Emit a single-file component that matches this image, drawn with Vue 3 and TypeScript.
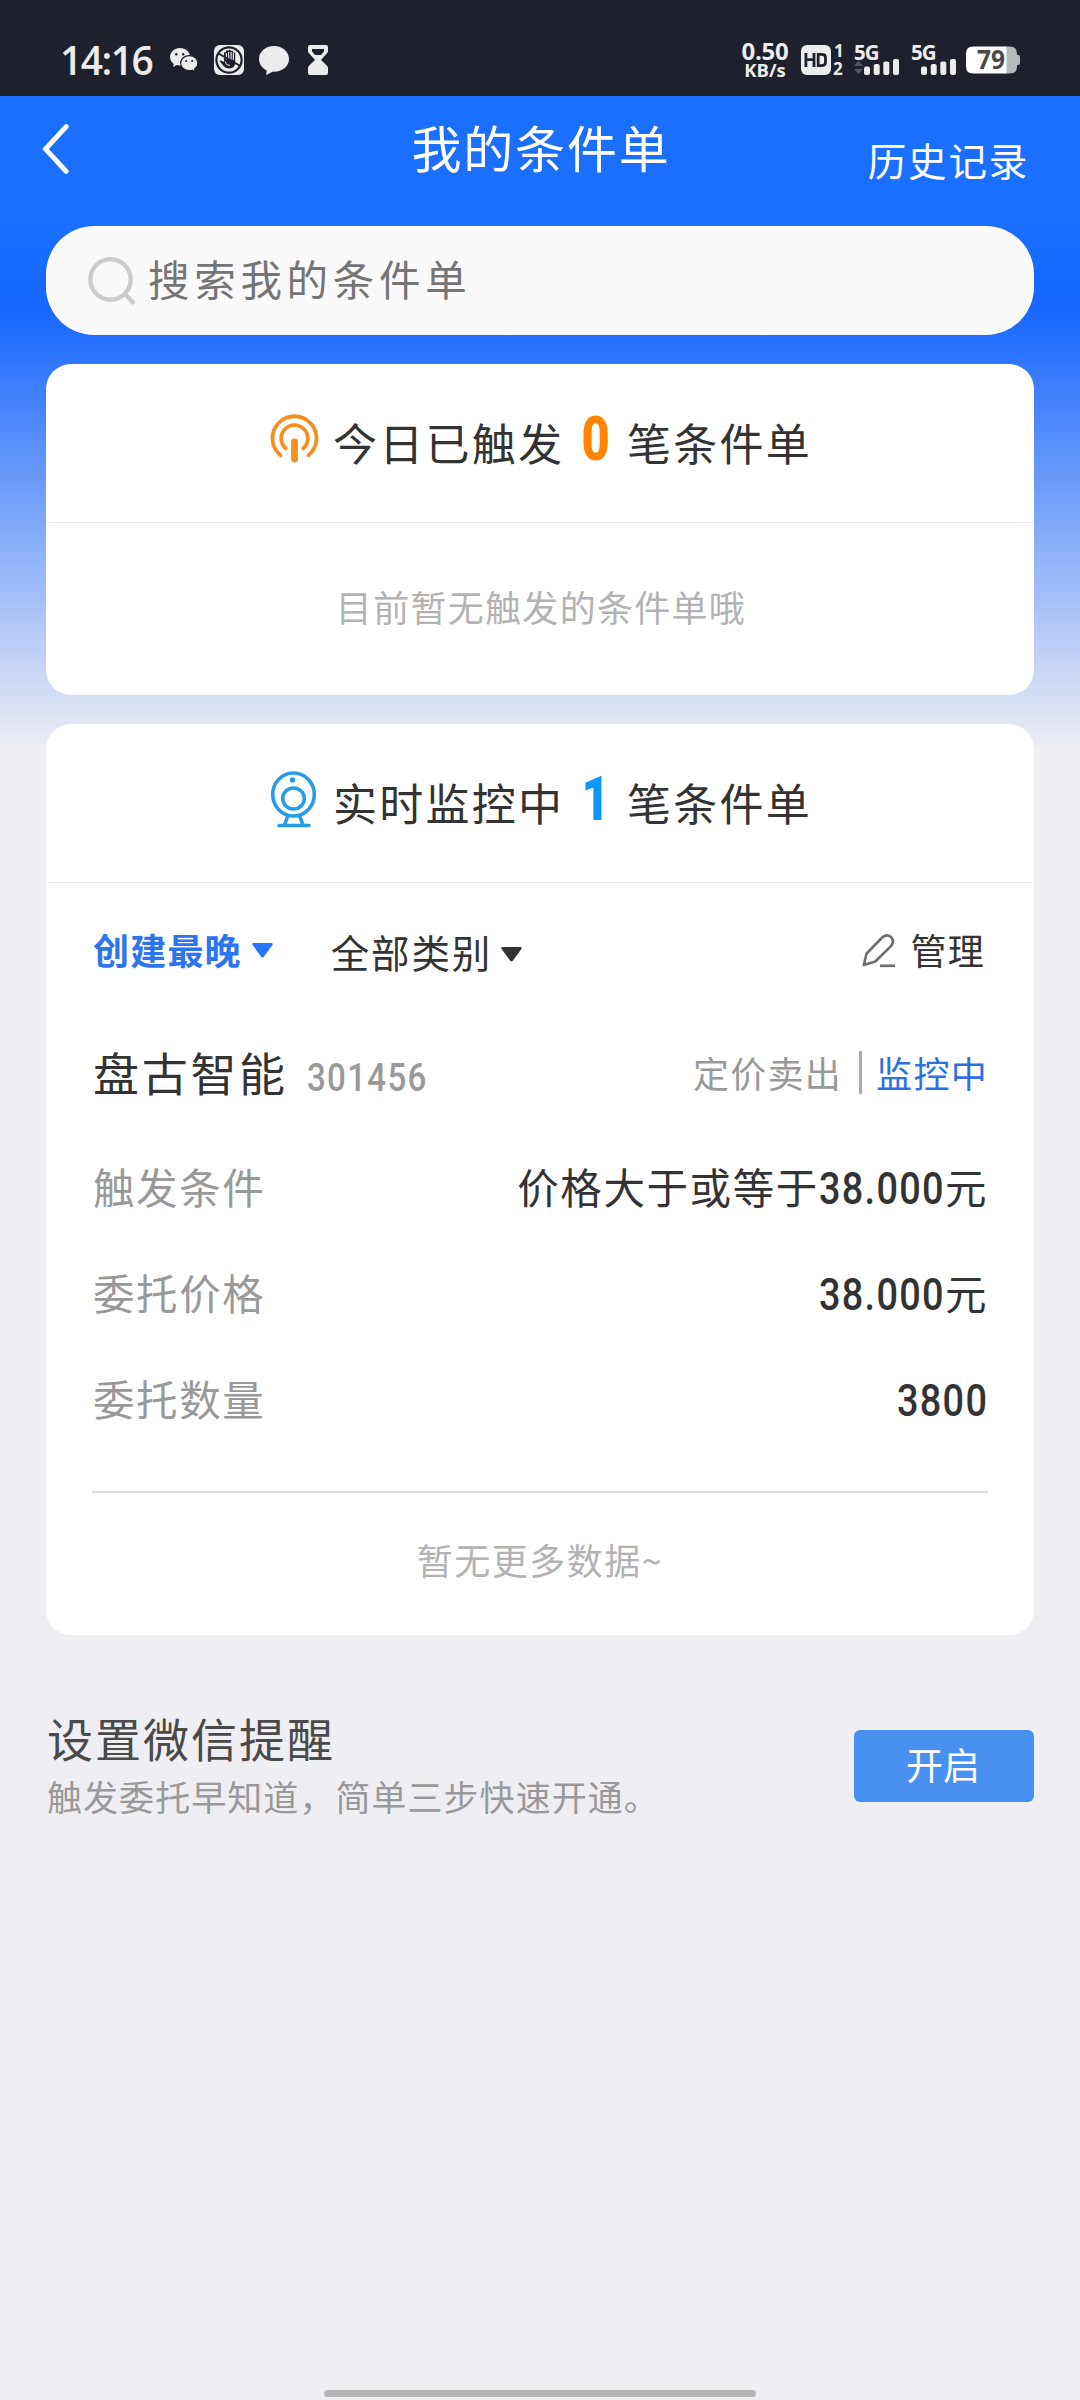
<script setup lang="ts">
interface Detail {
  label: string
  prefix: string
  amount: string
  unit: string
}

const details: Detail[] = [
  { label: '触发条件', prefix: '价格大于或等于', amount: '38.000', unit: '元' },
  { label: '委托价格', prefix: '', amount: '38.000', unit: '元' },
  { label: '委托数量', prefix: '', amount: '3800', unit: '' },
]

// Condensed digits leave unused width on their right; pull the next text in by it.
function condensedGap(amount: string): string {
  const dots = amount.split('.').length - 1
  const digits = amount.length - dots
  return `${-(digits * 3.67 + dots * 1.9).toFixed(1)}px`
}
</script>

<template>
  <div class="page">
    <header class="status">
      <span class="clock">14:16</span>
      <svg class="wechat" width="28" height="25" viewBox="0 0 28 25">
        <path fill="#ececec" d="M10 0C4.500 0 0 3.900 0 8.900c0 2.900 1.500 5.300 3.800 7L3 19l3.800-1.900c1 .3 2.100.5 3.200.5C15.500 17.600 20 13.700 20 8.800S15.500 0 10 0z" />
        <path fill="#ececec" stroke="#1e212b" stroke-width="1.200" d="M19.300 7.600c-4.800 0-8.700 3.300-8.700 7.500s3.900 7.500 8.700 7.500c1 0 2-.1 2.900-.4l3.200 1.700-.8-2.800c2-1.400 3.400-3.500 3.400-6 0-4.200-3.900-7.500-8.700-7.500z" />
        <g fill="#1e212b"><circle cx="6.300" cy="6.200" r="1.200" /><circle cx="13.200" cy="6.200" r="1.200" /><circle cx="16.200" cy="13" r="1" /><circle cx="22.200" cy="13" r="1" /></g>
      </svg>
      <svg class="hand" width="30" height="30" viewBox="0 0 30 30">
        <rect width="30" height="30" rx="6" fill="#ececec" />
        <circle cx="15" cy="15" r="12.600" fill="none" stroke="#1e212b" stroke-width="2.200" />
        <path fill="#1e212b" d="M10 14V8q0-1 1-1t1 1V6.500q0-1.200 1.200-1.200t1.200 1.200V6q0-1.200 1.200-1.200T16.800 6v.8q0-1 1.200-1t1.200 1.200v1.500q0-1 1-1t1 1V17q0 6.500-6 6.500-4 0-6-3L5.500 16q1.500-1.500 4.500 1z" />
        <path fill="none" stroke="#ececec" stroke-width="1.100" d="M12.300 8v6.500M14.700 7v7.500M17.100 7v7.500M19.300 8v7" />
        <path fill="none" stroke="#ececec" stroke-width="1" d="M11 16.500q1 4 5 4" />
        <path stroke="#1e212b" stroke-width="2" d="M4.500 8.500l21 12" />
      </svg>
      <svg class="bubble" width="30" height="29" viewBox="0 0 30 29">
        <path fill="#ececec" d="M15 0C6.500 0 0 5.600 0 13c0 5 3 9.200 7.600 11.300L7.200 29l6.300-3.300H15c8.500 0 15-5.400 15-12.700S23.500 0 15 0z" />
      </svg>
      <svg class="hourglass" width="20" height="30" viewBox="0 0 20 30">
        <path fill="#ececec" fill-rule="evenodd" d="M2 0h16q2 0 2 2v4q0 1-.8 2L13 15l6.200 6q.8 1 .8 2v5q0 2-2 2H2q-2 0-2-2v-5q0-1 .8-2L7 15 .8 8Q0 7 0 6V2q0-2 2-2zM4 4v2.500L7 10h6l3-3.500V4z" />
      </svg>
      <span class="spacer"></span>
      <span class="speed"><b>0.50</b><i>KB/s</i></span>
      <svg class="hd" width="44" height="32" viewBox="0 0 44 32">
        <rect y="1" width="30" height="30" rx="6" fill="#ececec" />
        <path fill="none" stroke="#1e212b" stroke-width="2.800" d="M4.900 9v14M13 9v14M4.900 15.700H13M17.200 10.400h3.300q4 0 4 3v5.200q0 3-4 3h-3.300z" />
        <text x="33" y="13" class="sim">1</text>
        <text x="32" y="31" class="sim">2</text>
      </svg>
      <svg class="signal" width="46" height="32" viewBox="0 0 46 32">
        <text x="0" y="16" class="net">5G</text>
        <path fill="#565961" d="M0 22l4.500-5 4.500 5zM0 25h9l-4.500 5z" />
        <rect x="10" y="22.500" width="6" height="8.500" rx="2" />
        <rect x="19.700" y="20" width="6" height="11" rx="2" />
        <rect x="29.300" y="17.500" width="6" height="13.500" rx="2" />
        <rect x="39" y="15" width="6" height="16" rx="2" />
      </svg>
      <svg class="signal second" width="46" height="32" viewBox="0 0 46 32">
        <text x="0" y="16" class="net">5G</text>
        <rect x="10" y="22.500" width="6" height="8.500" rx="2" />
        <rect x="19.700" y="20" width="6" height="11" rx="2" />
        <rect x="29.300" y="17.500" width="6" height="13.500" rx="2" />
        <rect x="39" y="15" width="6" height="16" rx="2" />
      </svg>
      <svg class="battery" width="54" height="28" viewBox="0 0 54 28">
        <path fill="#b9babe" d="M40 .5h4q7 0 7 7V9h1q2 0 2 2v6q0 2-2 2h-1v1.500q0 7-7 7h-4z" />
        <path fill="#fff" d="M7 .5h33.500v27H7q-7 0-7-7v-13q0-7 7-7z" />
        <text x="11" y="23" class="level" textLength="28" lengthAdjust="spacingAndGlyphs">79</text>
      </svg>
    </header>

    <nav class="nav">
      <svg class="back" width="28" height="50" viewBox="0 0 28 50">
        <path d="M24.300 2.500L3.500 25l20.800 22.500" fill="none" stroke="#fff" stroke-width="4.800" stroke-linecap="round" />
      </svg>
      <h1>我的条件单</h1>
      <a class="history">历史记录</a>
    </nav>

    <main>
      <div class="search">
        <svg width="48" height="48" viewBox="0 0 48 48" fill="none" stroke="#ccc" stroke-width="4.400" stroke-linecap="round">
          <circle cx="22.500" cy="22.500" r="20.200" />
          <path d="M38.500 38.500l6.500 7" />
        </svg>
        <span>搜索我的条件单</span>
      </div>

      <section class="card triggered">
        <div class="head">
          <svg class="head-icon up" width="47" height="49" viewBox="0 0 47 49" fill="none" stroke="#f5901e" stroke-linecap="round">
            <path stroke-width="3.800" d="M9.500 41.200A22 22 0 1 1 37.500 41.200" />
            <path stroke-width="3.800" d="M14.800 34.500A13.300 13.300 0 1 1 32.200 34.500" />
            <path stroke-width="6.800" d="M23.500 28v17" />
          </svg>
          <span>今日已触发</span><b class="count orange"><em>0</em></b><span>笔条件单</span>
        </div>
        <p class="empty">目前暂无触发的条件单哦</p>
      </section>

      <section class="card watching">
        <div class="head">
          <svg class="head-icon" width="47" height="57" viewBox="0 0 47 57" fill="none" stroke="#259bea" stroke-width="3.600">
            <ellipse cx="22.500" cy="23.500" rx="20.800" ry="21.500" />
            <ellipse cx="22.500" cy="27.500" rx="10.800" ry="10.500" />
            <circle cx="21.500" cy="9" r="2.700" fill="#259bea" stroke="none" />
            <path d="M17 44.500l-3.500 9.500M28.500 44.500L32 54M8 54.500h30" stroke-linecap="round" />
          </svg>
          <span>实时监控中</span><b class="count blue"><em>1</em></b><span>笔条件单</span>
        </div>

        <div class="filters">
          <span class="sort">创建最晚</span>
          <svg class="caret one" width="21" height="15" viewBox="0 0 21 15"><path fill="#2576ff" d="M2 0h17q3 0 1 2.500l-8 11q-1.500 2-3 0l-8-11Q-1 0 2 0z" /></svg>
          <span class="kind">全部类别</span>
          <svg class="caret two" width="21" height="15" viewBox="0 0 21 15"><path fill="#333" d="M2 0h17q3 0 1 2.500l-8 11q-1.500 2-3 0l-8-11Q-1 0 2 0z" /></svg>
          <span class="spacer"></span>
          <svg class="pencil" width="34" height="34" viewBox="0 0 34 34" fill="none" stroke="#707070" stroke-width="2.700">
            <path d="M1.800 31L4.600 19.500 20.500 3.200q4.500-3.800 8.700 0 3.500 4.200 0 8.700L13.300 27.500z" stroke-linejoin="round" />
            <path d="M18 31.800h15" />
          </svg>
          <span class="manage">管理</span>
        </div>

        <div class="stock">
          <span class="name">盘古智能</span>
          <span class="code">301456</span>
          <span class="spacer"></span>
          <span class="side">定价卖出</span>
          <span class="bar"></span>
          <span class="state">监控中</span>
        </div>

        <div v-for="d in details" :key="d.label" class="detail">
          <span class="label">{{ d.label }}</span>
          <span class="value">{{ d.prefix }}<span class="num" :style="{ marginRight: condensedGap(d.amount) }">{{ d.amount }}</span>{{ d.unit }}</span>
        </div>

        <p class="more">暂无更多数据~</p>
      </section>

      <section class="remind">
        <div>
          <h2>设置微信提醒</h2>
          <p>触发委托早知道，简单三步快速开通。</p>
        </div>
        <button type="button">开启</button>
      </section>
    </main>

    <div class="home"></div>
  </div>
</template>

<style>
body {
  margin: 0;
  background: #efeef3;
}
</style>

<style scoped>
* {
  box-sizing: border-box;
}
.page {
  display: flex;
  flex-direction: column;
  width: 1080px;
  height: 2400px;
  overflow: hidden;
  font-family: 'Noto Sans CJK SC', sans-serif;
  color: #333;
  white-space: nowrap;
  background: linear-gradient(180deg, #1a6fff 0, #1a6fff 215px, #1666ff 308px, #efeef3 750px, #efeef3 100%);
}
svg {
  display: block;
  flex: none;
  overflow: visible;
}
h1, h2, p {
  margin: 0;
  font-weight: 400;
}
.spacer {
  flex: 1;
}

.status {
  display: flex;
  align-items: center;
  height: 96px;
  padding: 24px 60px 0 60px;
  background: #1e212b;
  color: #ececec;
  font-family: 'Open Sans', 'Noto Sans', sans-serif;
}
.clock {
  width: 110px;
  font-size: 39px;
  line-height: 40px;
  font-weight: 600;
  letter-spacing: -1.500px;
}
.hand { margin-left: 16px; }
.bubble { margin-left: 15px; }
.hourglass { margin-left: 19px; }
.speed {
  display: flex;
  flex-direction: column;
  align-items: center;
  width: 50px;
}
.speed b {
  font-size: 24px;
  line-height: 19px;
  font-weight: 700;
  letter-spacing: -0.300px;
}
.speed i {
  font-size: 18.500px;
  line-height: 19px;
  font-style: normal;
  font-weight: 700;
}
.hd { margin-left: 11px; }
.sim {
  fill: #ececec;
  font-size: 17px;
  font-weight: 700;
}
.signal {
  margin-left: 9px;
  fill: #ececec;
}
.signal.second { margin-left: 11px; }
.net {
  font-size: 20.500px;
  font-weight: 700;
  letter-spacing: -1px;
}
.battery {
  margin: 0 0 0 9px;
}
.level {
  fill: #48484c;
  font-size: 26px;
  font-weight: 700;
}

.nav {
  display: grid;
  grid-template-columns: 1fr auto 1fr;
  align-items: start;
  height: 130px;
  padding: 0 51px 0 42px;
  color: #fff;
}
.back { margin-top: 28px; }
h1 {
  margin: 15px 0 0 11px;
  font-size: 50px;
  line-height: 70px;
  letter-spacing: 1.800px;
}
.history {
  justify-self: end;
  margin-top: 33px;
  font-size: 38.500px;
  line-height: 60px;
  letter-spacing: 1.800px;
}

main {
  padding: 0 46px;
}
.search {
  display: flex;
  align-items: center;
  gap: 12px;
  height: 109px;
  padding: 0 0 0 42px;
  border-radius: 48px;
  background: #fafafa;
  color: #757575;
}
.search span {
  margin-top: -6px;
  font-size: 41.500px;
  line-height: 60px;
  letter-spacing: 4.700px;
}

.card {
  border-radius: 25px;
  background: #fff;
}
.triggered {
  height: 331px;
  margin-top: 29px;
}
.watching {
  height: 911px;
  margin-top: 29px;
}
.head {
  display: flex;
  align-items: center;
  justify-content: center;
  height: 159px;
  padding: 0 0 3px 3px;
  border-bottom: 1px solid #e5e5e5;
  font-size: 44px;
  line-height: 60px;
  letter-spacing: 2.200px;
}
.head-icon {
  margin: 0 15px 4px 0;
}
.head-icon.up {
  margin-bottom: 6px;
}
.count {
  display: flex;
  justify-content: center;
  width: 63px;
  font-family: Roboto, sans-serif;
  font-size: 61px;
  font-weight: 900;
  line-height: 60px;
  letter-spacing: 0;
}
.count em {
  font-style: normal;
  transform: translateY(-3px) scaleX(0.800);
}
.orange { color: #ff8400; }
.blue { color: #0a98ff; }
.empty {
  padding-left: 2px;
  font-size: 36px;
  line-height: 166px;
  letter-spacing: 1.300px;
  text-align: center;
  color: #b3b3b3;
}

.filters {
  display: flex;
  align-items: center;
  height: 132px;
  padding: 0 49px 0 47px;
  line-height: 50px;
}
.sort {
  font-size: 36px;
  font-weight: 700;
  letter-spacing: 1.200px;
  color: #2c74f0;
}
.caret.one { margin: 2px 0 0 10px; }
.kind {
  margin: 3px 0 0 58px;
  font-size: 38.500px;
  letter-spacing: 1.800px;
}
.caret.two { margin: 11px 0 0 9px; }
.pencil { margin: 4px 14px 0 0; }
.manage {
  font-size: 36px;
  letter-spacing: 1.300px;
}

.stock {
  display: flex;
  align-items: center;
  height: 112px;
  margin-bottom: 5px;
  padding: 0 46px 0 47px;
  line-height: 60px;
  font-size: 36px;
  letter-spacing: 1.300px;
}
.name {
  font-size: 46px;
  letter-spacing: 2.700px;
}
.code {
  margin: 14px 0 0 19px;
  font-family: Roboto, sans-serif;
  font-size: 38.500px;
  font-weight: 500;
  letter-spacing: 1.500px;
  color: #999;
  transform: scaleX(0.860);
  transform-origin: left;
}
.side {
  margin-top: 2px;
  color: #999;
}
.bar {
  width: 3px;
  height: 43px;
  margin: 2px 14px 0 17px;
  background: #acacac;
}
.state {
  margin-top: 2px;
  color: #2c70e2;
}

.detail {
  display: flex;
  align-items: center;
  justify-content: space-between;
  height: 106px;
  padding: 2px 46px 0 47px;
  font-size: 41.500px;
  line-height: 60px;
  letter-spacing: 1.600px;
}
.label { color: #999; }
.num {
  display: inline-block;
  font-family: Roboto, sans-serif;
  font-size: 44px;
  font-weight: 500;
  line-height: 1;
  letter-spacing: 1.500px;
  transform: scaleX(0.860);
  transform-origin: left;
}
.more {
  margin: 41px 46px 0;
  padding-bottom: 10px;
  border-top: 2px solid #ddd;
  font-size: 36px;
  line-height: 132px;
  letter-spacing: 1.500px;
  text-align: center;
  color: #b3b3b3;
}

.remind {
  display: flex;
  align-items: center;
  justify-content: space-between;
  margin-top: 72px;
}
h2 {
  padding-left: 1px;
  font-size: 46px;
  line-height: 60px;
  letter-spacing: 2px;
  color: #4a4a4a;
}
.remind p {
  padding: 1px 0 0 1px;
  font-size: 35px;
  line-height: 56px;
  letter-spacing: 1.050px;
  color: #999;
}
button {
  width: 180px;
  height: 72px;
  padding: 0 2px 4px 0;
  border: 0;
  border-radius: 6px;
  background: #4991f1;
  color: #fff;
  font: 37px/60px 'Noto Sans CJK SC', sans-serif;
}
.home {
  width: 432px;
  height: 7px;
  margin: auto auto 3px;
  border-radius: 4px;
  background: #b5b5b7;
}
</style>
